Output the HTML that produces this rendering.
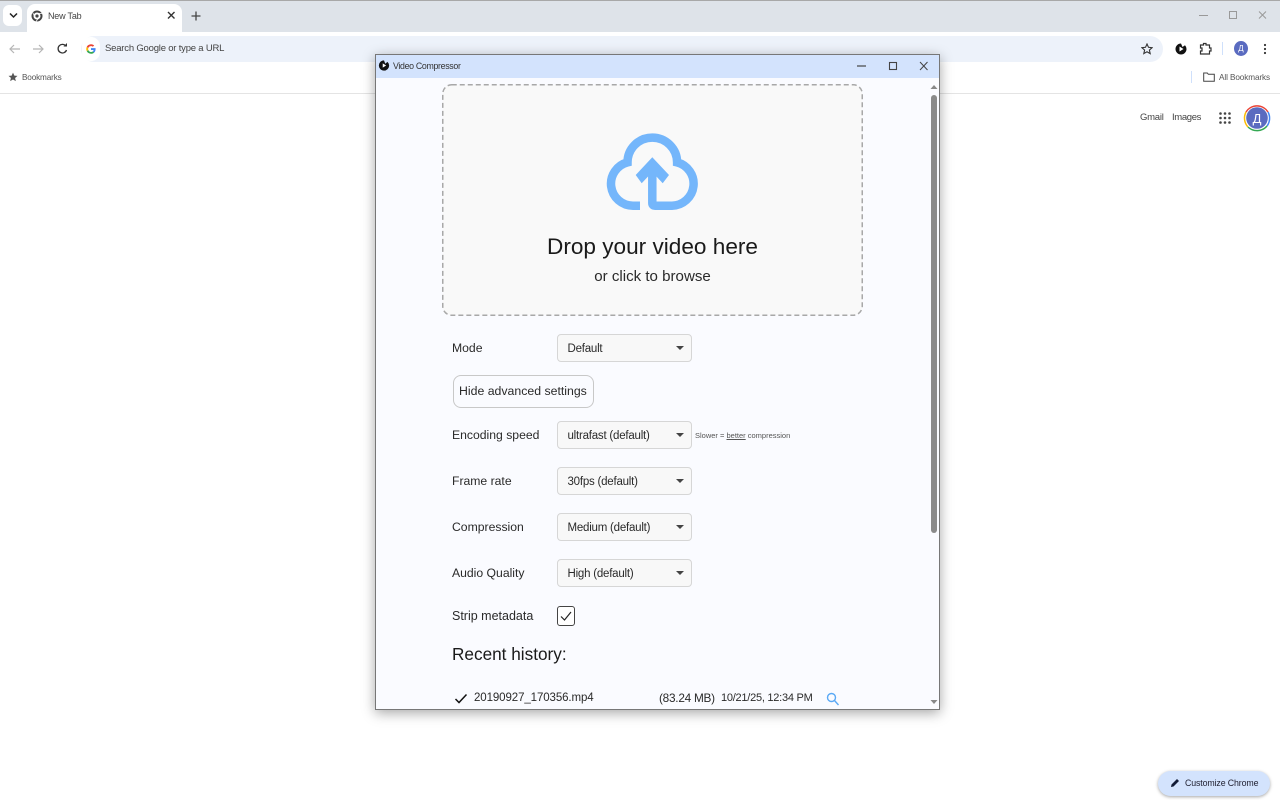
<!DOCTYPE html>
<html><head><meta charset="utf-8"><title>Video Compressor</title>
<style>
html,body{margin:0;padding:0;width:1280px;height:800px;overflow:hidden;background:#fff;font-family:"Liberation Sans",sans-serif;color:#222}
.a{position:absolute}
.t{position:absolute;white-space:nowrap;line-height:1}
.sel{position:absolute;left:557px;width:133px;height:26px;background:#f8f8f8;border:1px solid #d6d6d6;border-radius:4px}
.sel span{position:absolute;left:9.500px;top:7px;font-size:11.500px;line-height:14px;color:#2a2a2a;white-space:nowrap;letter-spacing:-.22px}
.sel i{position:absolute;left:118px;top:11px;width:0;height:0;border-left:4.500px solid transparent;border-right:4.500px solid transparent;border-top:4.500px solid #444}
.l{position:absolute;left:452px;font-size:12.200px;line-height:14px;color:#2a2a2a;white-space:nowrap}
</style></head><body>
<div class="a" style="left:0;top:0;width:1280px;height:32px;background:#dee3e9;border-top:1px solid #a8a8a8;box-sizing:border-box"></div>
<div class="a" style="left:3px;top:5px;width:19px;height:21px;background:#fff;border-radius:6px"></div>
<svg class="a" style="left:9px;top:12px" width="9" height="7"><path d="M1 1.500l3.500 3.500 3.500-3.500" fill="none" stroke="#222" stroke-width="1.500"/></svg>
<div class="a" style="left:27px;top:4px;width:155px;height:29px;background:#fff;border-radius:8px 8px 0 0"></div>
<svg class="a" style="left:31px;top:10px" width="12" height="12" viewBox="0 0 12 12"><circle cx="6" cy="6" r="4.500" fill="none" stroke="#444" stroke-width="2"/><circle cx="6" cy="6" r="1.600" fill="#444"/><path d="M6 3.500h5M4 7L1.800 2.800M7.500 8L5 11.500" stroke="#fff" stroke-width=".7"/></svg>
<div class="t" style="left:48px;top:11.500px;font-size:9px;color:#444;letter-spacing:-.2px">New Tab</div>
<svg class="a" style="left:167px;top:11px" width="9" height="9"><path d="M1 1l6.500 6.500M7.500 1L1 7.500" stroke="#333" stroke-width="1.400"/></svg>
<svg class="a" style="left:191px;top:11px" width="10" height="10"><path d="M5 .5v9M.5 5h9" stroke="#444" stroke-width="1.300"/></svg>
<svg class="a" style="left:1199px;top:10px" width="72" height="12"><path d="M0 5.500h9" stroke="#999" stroke-width="1"/><rect x="30.500" y="1.500" width="7" height="7" fill="none" stroke="#999"/><path d="M60 1.500l7 7M67 1.500l-7 7" stroke="#999"/></svg>

<div class="a" style="left:0;top:32px;width:1280px;height:61px;background:#fff;border-bottom:1px solid #e4e4e4"></div>
<svg class="a" style="left:8px;top:42px" width="62" height="14" fill="none" stroke-width="1.200"><path d="M12 7H2M6 3L2 7l4 4" stroke="#b5b5b5"/><path d="M25 7h10M31 3l4 4-4 4" stroke="#b5b5b5"/><path d="M58 4.300A4.300 4.300 0 1 0 58.500 8" stroke="#333" stroke-width="1.300"/><path d="M55.500 4.500h3.500V1z" fill="#333" stroke="none"/></svg>
<div class="a" style="left:81px;top:36px;width:1082px;height:26px;background:#edf2fa;border-radius:13px"></div>
<div class="a" style="left:82px;top:37px;width:18px;height:24px;background:#fff;border-radius:12px"></div>
<svg class="a" style="left:86px;top:44px" width="10" height="10" viewBox="0 0 48 48"><path fill="#4285f4" d="M46 24.500c0-1.600-.1-3.100-.4-4.500H24v9h12.400c-.5 2.900-2.200 5.300-4.600 7l7.200 5.600c4.300-3.900 7-9.800 7-17.100z"/><path fill="#34a853" d="M24 47c6.200 0 11.400-2 15-5.500l-7.200-5.600c-2 1.400-4.600 2.200-7.800 2.200-6 0-11.100-4-12.900-9.500l-7.500 5.800C7.300 41.900 15 47 24 47z"/><path fill="#fbbc05" d="M11.100 28.600c-.5-1.400-.7-2.900-.7-4.600s.3-3.200.7-4.600l-7.500-5.800C2 16.700 1 20.200 1 24s1 7.300 2.600 10.400z"/><path fill="#ea4335" d="M24 9.900c3.400 0 6.400 1.200 8.800 3.400L39.200 7C35.400 3.400 30.200 1 24 1 15 1 7.300 6.100 3.600 13.600l7.500 5.800C12.900 13.900 18 9.900 24 9.900z"/></svg>
<div class="t" style="left:105px;top:44px;font-size:9.500px;color:#444;letter-spacing:-.2px">Search Google or type a URL</div>
<svg class="a" style="left:1141px;top:43px" width="12" height="12" viewBox="0 0 12 12"><path d="M6 1l1.500 3.300 3.600.4-2.700 2.400.8 3.500L6 8.800l-3.200 1.800.8-3.500L.9 4.700l3.600-.4z" fill="none" stroke="#333" stroke-width="1.100"/></svg>
<svg class="a" style="left:1174px;top:42px" width="14" height="14" viewBox="0 0 14 14"><path d="M7 1.500A5.500 5.500 0 1 0 12.500 7 5.500 5.500 0 0 0 11 3.200L8.500 5z" fill="#111"/><path d="M5.500 4.500l4 2.500-4 2.500z" fill="#fff"/></svg>
<svg class="a" style="left:1199px;top:42px" width="13" height="13" viewBox="0 0 13 13"><path d="M1.500 3h3V1.500h2.500V3h3.500v3H12v3h-1.500v3h-9V9H3V6H1.500z" fill="none" stroke="#333" stroke-width="1.200"/></svg>
<div class="a" style="left:1222px;top:42px;width:1px;height:13px;background:#cfe0fb"></div>
<div class="a" style="left:1234px;top:41px;width:14px;height:15px;background:#5a6bc0;border-radius:50%;color:#fff;font-size:8px;line-height:15px;text-align:center">Д</div>
<svg class="a" style="left:1262px;top:43px" width="6" height="12"><circle cx="3" cy="2" r="1.100" fill="#333"/><circle cx="3" cy="6" r="1.100" fill="#333"/><circle cx="3" cy="10" r="1.100" fill="#333"/></svg>

<svg class="a" style="left:8px;top:72px" width="10" height="10" viewBox="0 0 12 12"><path d="M6 .8l1.600 3.500 3.800.4-2.900 2.500.9 3.800L6 9l-3.400 1.900.9-3.800L.6 4.700l3.800-.4z" fill="#555"/></svg>
<div class="t" style="left:22px;top:73.500px;font-size:8.200px;color:#555;letter-spacing:-.15px">Bookmarks</div>
<div class="a" style="left:1191px;top:71px;width:1px;height:12px;background:#cfe0fb"></div>
<svg class="a" style="left:1203px;top:72px" width="12" height="10" viewBox="0 0 12 10"><path d="M.7 1h3.600l1 1.300h6v7H.7z" fill="none" stroke="#444"/></svg>
<div class="t" style="left:1219px;top:73.500px;font-size:8.200px;color:#555;letter-spacing:-.1px">All Bookmarks</div>

<div class="t" style="left:1140px;top:113px;font-size:9.500px;color:#444;letter-spacing:-.25px">Gmail</div>
<div class="t" style="left:1172px;top:113px;font-size:9.500px;color:#444;letter-spacing:-.35px">Images</div>
<svg class="a" style="left:1219px;top:112px" width="12" height="12" fill="#444"><circle cx="1.500" cy="1.500" r="1.300"/><circle cx="6" cy="1.500" r="1.300"/><circle cx="10.500" cy="1.500" r="1.300"/><circle cx="1.500" cy="6" r="1.300"/><circle cx="6" cy="6" r="1.300"/><circle cx="10.500" cy="6" r="1.300"/><circle cx="1.500" cy="10.500" r="1.300"/><circle cx="6" cy="10.500" r="1.300"/><circle cx="10.500" cy="10.500" r="1.300"/></svg>
<svg class="a" style="left:1243px;top:103px" width="28" height="30" viewBox="0 0 28 30"><g fill="none" stroke-width="1.500"><path d="M3 9A13 13 0 0 1 25 9" stroke="#ea4335"/><path d="M25 9A13 13 0 0 1 24 23" stroke="#4285f4"/><path d="M24 23A13 13 0 0 1 5 24" stroke="#34a853"/><path d="M5 24A13 13 0 0 1 3 9" stroke="#fbbc05"/></g><circle cx="14" cy="15" r="10.800" fill="#5a6bc0"/></svg>
<div class="t" style="left:1243px;top:111.500px;width:28px;text-align:center;font-size:13px;color:#fff">Д</div>

<div class="a" style="left:1158px;top:771px;width:112px;height:25px;background:#d3e3fd;border-radius:13px;box-shadow:0 1px 3px rgba(0,0,0,.35)"></div>
<svg class="a" style="left:1170px;top:778px" width="10" height="10" viewBox="0 0 10 10"><path d="M1 9l.5-2.500L7 1l2 2-5.500 5.500z" fill="#111b36"/></svg>
<div class="t" style="left:1185px;top:779px;font-size:8.800px;color:#223;letter-spacing:-.12px">Customize Chrome</div>

<div class="a" style="left:375px;top:54px;width:565px;height:656px;background:#fafbff;border:1px solid #777;box-sizing:border-box;box-shadow:0 3px 12px rgba(0,0,0,.35)"></div>
<div class="a" style="left:376px;top:55px;width:563px;height:23px;background:#d3e3fd"></div>
<svg class="a" style="left:378px;top:59px" width="12" height="13" viewBox="0 0 14 14"><path d="M7 1A6 6 0 1 0 13 7 6 6 0 0 0 11 2.800L8.500 5z" fill="#111"/><path d="M5.500 4.500l4 2.500-4 2.500z" fill="#fff"/></svg>
<div class="t" style="left:393px;top:61.500px;font-size:8.800px;color:#333;letter-spacing:-.32px">Video Compressor</div>
<svg class="a" style="left:856px;top:60px" width="74" height="12" fill="none" stroke="#444"><path d="M1 6h9" stroke-width="1.200"/><rect x="33.500" y="2.500" width="7" height="7" stroke-width="1.100"/><path d="M64 2l7.500 8M71.500 2L64 10" stroke-width="1"/></svg>

<svg class="a" style="left:442px;top:84px" width="421" height="232"><rect x=".75" y=".75" width="419.500" height="230.500" rx="9" fill="#f9f9f9" stroke="#a8a8a8" stroke-width="1.500" stroke-dasharray="5 3"/></svg>
<svg class="a" style="left:600px;top:128px" width="104" height="88" viewBox="0 0 104 88"><path d="M40 77.700H33A22 22 0 0 1 27.500 34.400A24.800 24.800 0 0 1 77.100 34.400A22 22 0 0 1 72 77.700H55Q52.300 77.700 52.300 75V42" fill="none" stroke="#74b6fb" stroke-width="8.500"/><path d="M52.300 29.300L35.700 47 41.700 55.300 52.300 44 62.700 55.300 69 47z" fill="#74b6fb"/></svg>

<div class="t" style="left:442px;top:236px;width:421px;text-align:center;font-size:22.600px;color:#1a1a1a">Drop your video here</div>
<div class="t" style="left:442px;top:268.500px;width:421px;text-align:center;font-size:15.100px;color:#2a2a2a">or click to browse</div>

<div class="l" style="top:341px">Mode</div>
<div class="sel" style="top:334px"><span>Default</span><i></i></div>
<div class="a" style="left:453px;top:375px;width:141px;height:33px;box-sizing:border-box;background:#fafbff;border:1.500px solid #c8c8c8;border-radius:8px"></div>
<div class="t" style="left:459px;top:385px;font-size:12.300px;color:#2a2a2a">Hide advanced settings</div>
<div class="l" style="top:427.500px">Encoding speed</div>
<div class="sel" style="top:421px"><span>ultrafast (default)</span><i></i></div>
<div class="t" style="left:695px;top:431.500px;font-size:7.500px;color:#555">Slower = <u>better</u> compression</div>
<div class="l" style="top:473.500px">Frame rate</div>
<div class="sel" style="top:467px"><span>30fps (default)</span><i></i></div>
<div class="l" style="top:519.500px">Compression</div>
<div class="sel" style="top:513px"><span>Medium (default)</span><i></i></div>
<div class="l" style="top:566px">Audio Quality</div>
<div class="sel" style="top:559px"><span>High (default)</span><i></i></div>
<div class="l" style="top:608.500px;font-size:12.500px">Strip metadata</div>
<div class="a" style="left:557px;top:606px;width:18px;height:20px;box-sizing:border-box;border:1.500px solid #444;border-radius:3px;background:#fff"></div>
<svg class="a" style="left:559px;top:609px" width="14" height="14"><path d="M2 7.500l3.500 3.500L12 3" fill="none" stroke="#222" stroke-width="1.200"/></svg>
<div class="t" style="left:452px;top:646px;font-size:17.200px;color:#1a1a1a">Recent history:</div>
<svg class="a" style="left:454px;top:692px" width="14" height="13"><path d="M1.500 7l3.500 3.500L12.500 2.500" fill="none" stroke="#111" stroke-width="1.500"/></svg>
<div class="t" style="left:474px;top:693px;font-size:11.500px;color:#2a2a2a;letter-spacing:-.1px">20190927_170356.mp4</div>
<div class="t" style="left:659px;top:692.500px;font-size:11.800px;color:#2a2a2a;letter-spacing:-.25px">(83.24 MB)</div>
<div class="t" style="left:721px;top:693px;font-size:11px;color:#2a2a2a;letter-spacing:-.25px">10/21/25, 12:34 PM</div>
<svg class="a" style="left:826px;top:692px" width="13" height="14" fill="none" stroke="#5aa9f5" stroke-width="1.400"><circle cx="5.500" cy="5.500" r="4"/><path d="M8.500 8.500l4 4.500"/></svg>

<svg class="a" style="left:930px;top:84px" width="8" height="6"><path d="M4 1l3.500 4H.5z" fill="#888"/></svg>
<div class="a" style="left:931px;top:95px;width:6px;height:438px;background:#8a8a8a;border-radius:3px"></div>
<svg class="a" style="left:930px;top:699px" width="8" height="6"><path d="M4 5L.5 1h7z" fill="#888"/></svg>
</body></html>
